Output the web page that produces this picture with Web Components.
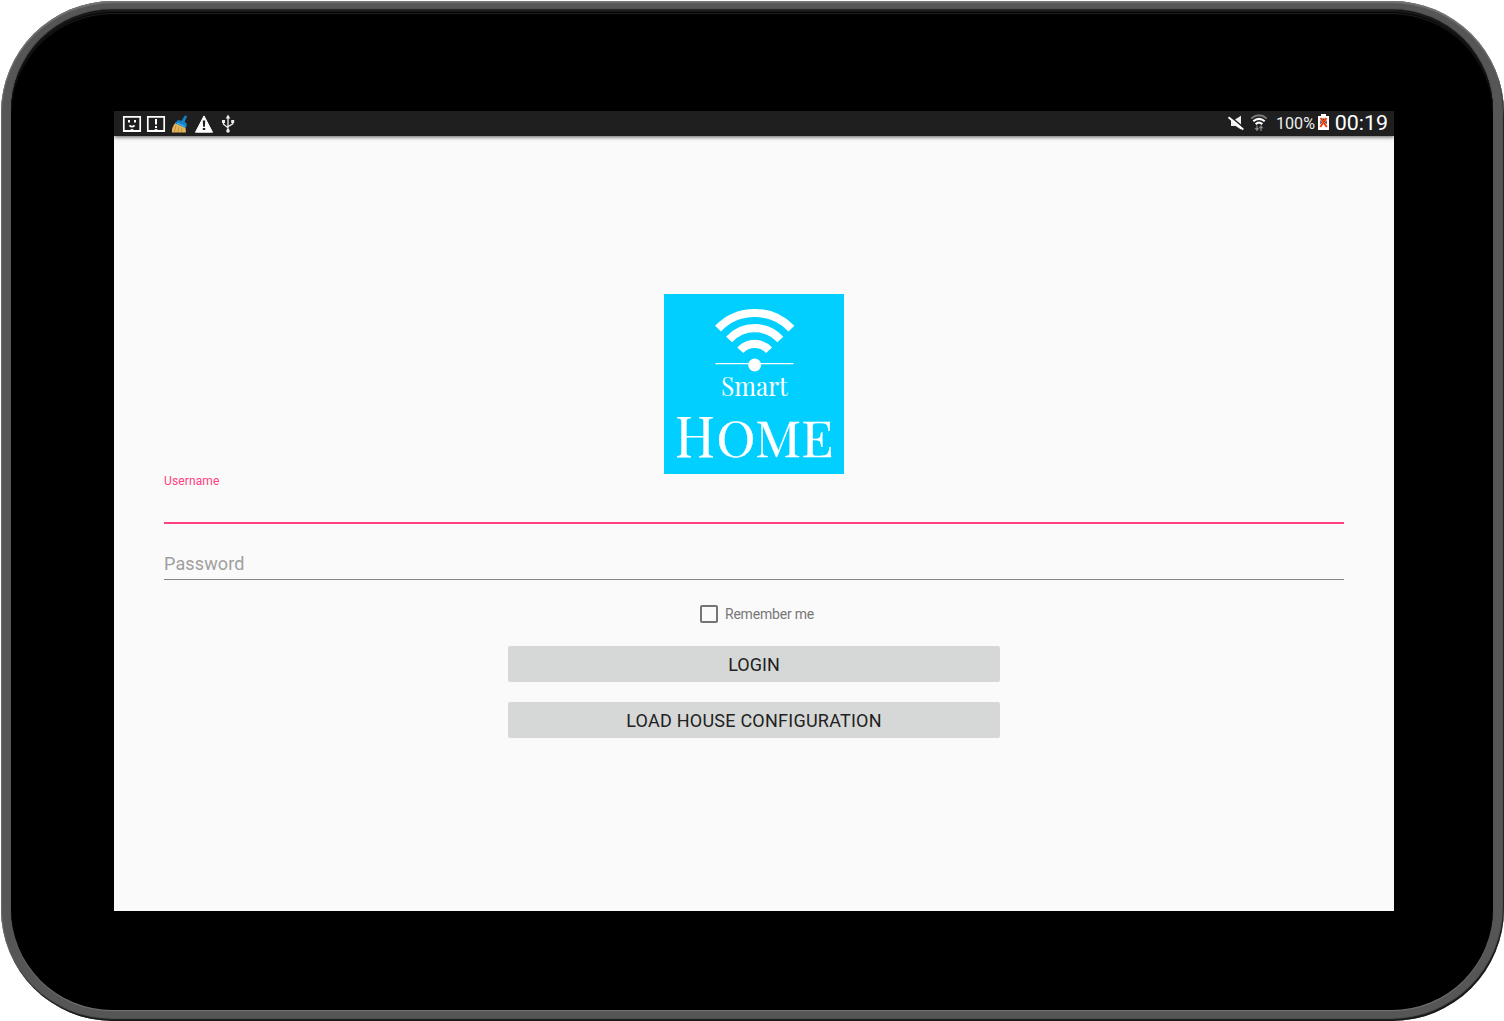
<!DOCTYPE html>
<html lang="en">
<head>
<meta charset="utf-8">
<title>Smart Home</title>
<style>
html,body{margin:0;background:#fff;width:1504px;height:1021px;overflow:hidden}
</style>
</head>
<body>
<tablet-frame>
  <status-bar></status-bar>
  <login-form>
    <home-logo></home-logo>
    <text-field label="Username" active></text-field>
    <text-field label="Password"></text-field>
    <check-option>Remember me</check-option>
    <action-button>LOGIN</action-button>
    <action-button style="letter-spacing:.24px">LOAD HOUSE CONFIGURATION</action-button>
  </login-form>
</tablet-frame>
<script>
function define(name, markup) {
  customElements.define(name, class extends HTMLElement {
    constructor() {
      super();
      this.attachShadow({mode: 'open'}).innerHTML = markup;
    }
  });
}

define('tablet-frame', `
<style>
:host{display:block;box-sizing:border-box;width:1504px;height:1021px;padding:1px 0 0 1px;font-family:Roboto,sans-serif}
.shell{box-sizing:border-box;width:1503px;height:1020px;padding:9px 11px 11px 10px;border-radius:112px;background:#565656;
 box-shadow:inset 0 2px 1px #747474,inset -1px -2px 1px #181818,inset 1px 0 1px #6b6b6b}
.glass{box-sizing:border-box;width:1482px;height:1000px;padding:101px 103px 99px;border-radius:101px;background:#000;
 box-shadow:inset 0 2px 1px #1b1b1b,inset 0 3px 1px #000,inset 0 4px 1px #252525,0 -1px 1px #222,0 1px 1px #777}
.screen{width:1280px;height:800px;background:#fafafa;overflow:hidden}
</style>
<div class="shell"><div class="glass"><div class="screen"><slot></slot></div></div></div>`);

define('status-bar', `
<style>
:host{display:flex;justify-content:space-between;width:1280px;height:25px;background:#1f1f1f;color:#fff;
 box-shadow:0 1px 4px rgba(0,0,0,.65);position:relative}
svg{display:block}
</style>
<svg width="130" height="25" viewBox="0 0 130 25">
  <g fill="none" stroke="#fff" stroke-width="1.7">
    <path d="M9.8 5.8H26.2V20.2H9.8Z"/>
    <path d="M33.8 5.8H50.2V20.2H33.8Z"/>
    <path d="M15.4 14.3Q18 16.8 20.6 14.3"/>
  </g>
  <path fill="#fff" d="M14 9h2v2.6h-2zM20 9h2v2.6h-2zM41 8h2v5.5h-2zM41 15h2v2h-2zM9 19H27V21H9zM33 19H51V21H33zM16 19L18 17.8L20 19zM40 19L42 17.8L44 19z"/>
  <path fill="#e3b65d" d="M61.5 11.5L71.5 16.2L72 21.5H58C57.3 18.5 59 14.5 61.5 11.5Z"/>
  <path stroke="#b98532" stroke-width=".8" fill="none" d="M62 14.5L60.5 21M65 16L63.7 21M68 17L67.3 21"/>
  <path fill="#1680c4" d="M61 12.2L64 8.9L67.6 9.7L70.8 4.6L73.2 5L70.7 10.5L73 13.3L71.8 17.2Z"/>
  <path stroke="#54b9ee" fill="none" d="M63 12L71 15.5"/>
  <path fill="#fff" stroke="#fff" stroke-linejoin="round" d="M90 4.9L98.5 21.2H81.5Z"/>
  <path fill="#1f1f1f" d="M88.8 9.5h2.4l-.3 6.2h-1.8zM88.8 17h2.4v2h-2.4z"/>
  <g fill="none" stroke="#eee" stroke-width="1.3"><path d="M114 6.5V20M109.5 10V13.3L114 16.8M118.7 10V12.8L114 15.7"/></g>
  <path fill="#eee" d="M114 3.4L116.3 7.4H111.7zM108 9h3v3h-3zM117.2 9h3v3h-3z"/><circle cx="114" cy="19.9" r="1.8" fill="#eee"/>
</svg>
<svg width="174" height="25" viewBox="1106 0 174 25" font-family="Roboto,sans-serif" fill="#fff">
  <path fill="#eee" d="M1117 8.5H1121L1127 4.8V18.4L1121.5 15H1117Z"/>
  <path stroke="#1f1f1f" stroke-width="1.6" d="M1116 5.2L1130 17"/>
  <path stroke="#fff" stroke-width="1.9" d="M1114.5 6.3L1129.3 18.4"/>
  <g fill="none" stroke-width="1.9">
    <path stroke="#777" d="M1137.2 7.5Q1145 1.2 1152.8 7.5"/>
    <path stroke="#fff" stroke-width="2.1" d="M1139.3 10.3Q1145 5.4 1150.7 10.3"/>
    <path stroke="#fff" stroke-width="2.1" d="M1141.7 13.1Q1145 10.1 1148.3 13.1"/>
    <path stroke="#858585" stroke-width="1.3" d="M1143 14.5V19M1147 20V15.5"/>
  </g>
  <path fill="#858585" d="M1140.6 17h4.8l-2.4 3.2zM1144.6 17.2h4.8l-2.4-3.2z"/>
  <text x="1162" y="18" font-size="16" textLength="39" lengthAdjust="spacingAndGlyphs" fill="#eee">100%</text>
  <path fill="#fff" d="M1207 3h5v2h3v14h-11V5h3z"/>
  <path fill="#333" d="M1208 7.4h3l-1.5 2.6zM1206.3 9v4.6l1.7-2.3zM1212.7 9v4.6l-1.7-2.3z"/>
  <path stroke="#f23c0c" stroke-width="2" d="M1206.6 7L1212.8 16M1212.5 7L1206.3 16"/>
  <text x="1220.7" y="19" font-size="21" textLength="53.3" lengthAdjust="spacingAndGlyphs">00:19</text>
</svg>`);

define('login-form', `
<style>
:host{display:flex;flex-direction:column;align-items:center;box-sizing:border-box;height:775px;padding-top:158px}
</style><slot></slot>`);

define('home-logo', `
<style>:host{display:block;width:180px;height:180px;background:#00cfff}svg{display:block}</style>
<svg width="180" height="180" viewBox="0 0 180 180" fill="#fff" font-family="'Playfair Display','Liberation Serif',serif">
  <g fill="none" stroke="#fff" stroke-width="8.2">
    <path d="M54 34.6A51 51 0 0 1 127.4 34.6"/>
    <path d="M65.1 45.5A34.7 34.7 0 0 1 116.3 45.5"/>
    <path d="M76.3 56.3A19.5 19.5 0 0 1 105.1 56.3"/>
  </g>
  <path d="M51.5 69h78v1.2h-78z"/><circle cx="90.7" cy="71" r="6.5"/>
  <text x="57" y="101.8" font-size="25.5" textLength="66.8" lengthAdjust="spacingAndGlyphs">Smart</text>
  <text y="162.6" stroke="#fff" stroke-width=".3"><tspan x="11" font-size="56" textLength="40" lengthAdjust="spacingAndGlyphs">H</tspan><tspan x="52.2" font-size="48.8" textLength="117.5" lengthAdjust="spacingAndGlyphs">OME</tspan></text>
</svg>`);

customElements.define('text-field', class extends HTMLElement {
  constructor() { super(); this.attachShadow({mode: 'open'}); }
  connectedCallback() {
    const active = this.hasAttribute('active');
    this.shadowRoot.innerHTML = `
<style>
:host{display:flex;flex-direction:column;justify-content:space-between;box-sizing:border-box;width:1180px;
 height:${active ? 50 : 56}px;padding-top:${active ? 0 : 29}px;
 border-bottom:${active ? '2px solid #ff4081' : '1px solid #858585'}}
label{display:block;color:${active ? '#ff4081' : '#9f9f9f'};font-size:${active ? 12 : 18}px;line-height:${active ? 14 : 22}px;
 letter-spacing:${active ? .12 : .13}px}
</style><label>${this.getAttribute('label')}</label>`;
  }
});

define('check-option', `
<style>
:host{display:flex;align-items:center;gap:7px;height:32px;margin:18px 0 16px 6px;color:#777;font-size:14px;letter-spacing:-.2px}
i{box-sizing:border-box;width:18px;height:18px;border:2px solid #757575;border-radius:2px}
</style><i></i><span><slot></slot></span>`);

define('action-button', `
<style>
:host{display:flex;align-items:center;justify-content:center;width:492px;height:36px;margin-bottom:20px;
 border-radius:2px;background:#d6d8d7;color:#212121;font-size:18px;line-height:22px}
span{padding-top:1px}
</style><span><slot></slot></span>`);
</script>
</body>
</html>
